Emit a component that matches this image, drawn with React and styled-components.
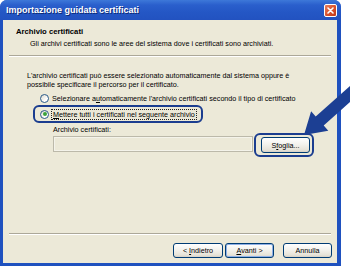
import React from "react";
import styled, { createGlobalStyle } from "styled-components";

const GlobalStyle = createGlobalStyle`
  html, body { margin: 0; padding: 0; background: #ffffff; }
  body { font-family: "Liberation Sans", Arial, sans-serif; color: #000; }
`;

const Page = styled.div`
  position: relative;
  width: 350px;
  height: 267px;
  overflow: hidden;
`;

const Window = styled.div`
  width: 341px;
  height: 266px;
  display: flex;
  flex-direction: column;
  background: #1f51bf;
  border-radius: 7px 7px 0 0;
  overflow: hidden;
`;

const TitleBar = styled.div`
  height: 20px;
  flex: none;
  display: flex;
  align-items: center;
  justify-content: space-between;
  padding: 0 4px 0 6px;
  background: linear-gradient(#3d78d9 0%, #2a5fcc 25%, #2457c5 60%, #2252c0 100%);
`;

const Title = styled.span`
  color: #ffffff;
  font-weight: bold;
  font-size: 9px;
  line-height: 12px;
  text-shadow: 1px 1px 0 #0b2a78;
`;

const CloseButton = styled.div`
  width: 13px;
  height: 13px;
  box-sizing: border-box;
  border: 1px solid #ffffff;
  border-radius: 2px;
  background: linear-gradient(135deg, #e8805f 0%, #d9502a 55%, #c0391a 100%);
  display: flex;
  align-items: center;
  justify-content: center;
`;

const Client = styled.div`
  flex: 1;
  margin: 0 4px 3px 3px;
  background: #ece9d8;
  display: flex;
  flex-direction: column;
  font-size: 7.2px;
  line-height: 9px;
`;

const Header = styled.div`
  padding: 7px 0 6px 13px;
  display: flex;
  flex-direction: column;
  gap: 2px;
`;

const HeaderTitle = styled.div`
  font-weight: bold;
  font-size: 7.7px;
  line-height: 10px;
`;

const HeaderSub = styled.div`
  margin-left: 14px;
  line-height: 10px;
`;

const Separator = styled.div`
  flex: none;
  margin: 0 6px;
  border-top: 1px solid #aca899;
  border-bottom: 1px solid #ffffff;
`;

const Body = styled.div`
  padding: 14px 0 0 24px;
  display: flex;
  flex-direction: column;
  align-items: flex-start;
`;

const Paragraph = styled.div`
  width: 300px;
`;

const RadioRow = styled.div`
  display: flex;
  align-items: center;
  gap: 3px;
  height: 12px;
  margin: 3px 0 0 13px;
`;

const HighlightRow = styled.div`
  display: flex;
  align-items: center;
  gap: 3px;
  box-sizing: border-box;
  width: 170px;
  height: 18px;
  margin: 1px 0 0 6px;
  padding: 0 5px;
  border: 2px solid #1b3d8f;
  border-radius: 6px;
`;

const Radio = styled.span`
  flex: none;
  width: 9px;
  height: 9px;
  box-sizing: border-box;
  border-radius: 50%;
  border: 1px solid #2a5a8a;
  background: linear-gradient(135deg, #dcd9cd 0%, #ffffff 70%);
  display: flex;
  align-items: center;
  justify-content: center;
  &::after {
    content: "";
    width: 4px;
    height: 4px;
    border-radius: 50%;
    background: ${(p) => (p.$checked ? "#3aa23a" : "transparent")};
  }
`;

const FocusText = styled.span`
  outline: 1px dotted #222;
  outline-offset: 0;
  padding: 0 1px;
  line-height: 9px;
`;

const FieldLabel = styled.div`
  margin: 3px 0 0 26px;
  line-height: 8px;
`;

const FieldRow = styled.div`
  display: flex;
  align-items: flex-start;
  margin: -1px 0 0 26px;
`;

const Field = styled.div`
  width: 200px;
  height: 16px;
  margin-top: 3px;
  box-sizing: border-box;
  border: 1px solid #bcb9aa;
  background: #ece9d8;
  box-shadow: inset 0 0 0 1px #f4f3ea;
`;

const ButtonHighlight = styled.div`
  margin-left: 1px;
  box-sizing: border-box;
  height: 24px;
  padding: 2px 2px 2px 5px;
  border: 2px solid #1b3d8f;
  border-radius: 6px;
  display: flex;
  align-items: center;
`;

const Button = styled.div`
  box-sizing: border-box;
  width: ${(p) => p.$w || 49}px;
  height: ${(p) => p.$h || 15}px;
  border: 1px solid #003c74;
  border-radius: 3px;
  background: linear-gradient(#ffffff 0%, #f3f2ed 45%, #e6e3d8 85%, #d6d0c5 100%);
  box-shadow: ${(p) => (p.$default ? "inset 0 0 0 1px #8fb0e6" : "none")};
  display: flex;
  align-items: center;
  justify-content: center;
  font-size: 7.2px;
  white-space: pre;
  margin-left: ${(p) => p.$ml || 0}px;
`;

const Spacer = styled.div`
  flex: 1;
`;

const Footer = styled.div`
  display: flex;
  justify-content: flex-end;
  gap: 2px;
  padding: 8px 5px 5px 0;
`;

const ArrowLayer = styled.svg`
  position: absolute;
  left: 0;
  top: 0;
  width: 350px;
  height: 267px;
  pointer-events: none;
`;

export default function App() {
  return (
    <Page>
      <GlobalStyle />
      <Window>
        <TitleBar>
          <Title>Importazione guidata certificati</Title>
          <CloseButton>
            <svg width="7" height="7" viewBox="0 0 7 7">
              <path d="M1 1 L6 6 M6 1 L1 6" stroke="#fff" strokeWidth="1.6" strokeLinecap="round" />
            </svg>
          </CloseButton>
        </TitleBar>
        <Client>
          <Header>
            <HeaderTitle>Archivio certificati</HeaderTitle>
            <HeaderSub>
              Gli archivi certificati sono le aree del sistema dove i certificati sono archiviati.
            </HeaderSub>
          </Header>
          <Separator />
          <Body>
            <Paragraph>
              L'archivio certificati può essere selezionato automaticamente dal sistema oppure è
              <br />
              possibile specificare il percorso per il certificato.
            </Paragraph>
            <RadioRow>
              <Radio />
              <span>
                Selezionare a<u>u</u>tomaticamente l'archivio certificati secondo il tipo di certificato
              </span>
            </RadioRow>
            <HighlightRow>
              <Radio $checked />
              <FocusText>
                <u>M</u>ettere tutti i certificati nel seguente archivio
              </FocusText>
            </HighlightRow>
            <FieldLabel>Archivio certificati:</FieldLabel>
            <FieldRow>
              <Field />
              <ButtonHighlight>
                <Button $w={49} $h={16}>
                  S<u>f</u>oglia...
                </Button>
              </ButtonHighlight>
            </FieldRow>
          </Body>
          <Spacer />
          <Separator />
          <Footer>
            <Button $w={50}>
              {"< "}<u>I</u>ndietro
            </Button>
            <Button $w={49} $default>
              <u>A</u>{"vanti >"}
            </Button>
            <Button $w={49} $ml={7}>
              Annulla
            </Button>
          </Footer>
        </Client>
      </Window>
      <ArrowLayer viewBox="0 0 350 267">
        <polygon
          points="304,135 311.1,111.3 315.7,116.5 353.1,83.2 361.1,92.2 323.7,125.5 328.3,130.7"
          fill="#1c3f93"
        />
      </ArrowLayer>
    </Page>
  );
}
